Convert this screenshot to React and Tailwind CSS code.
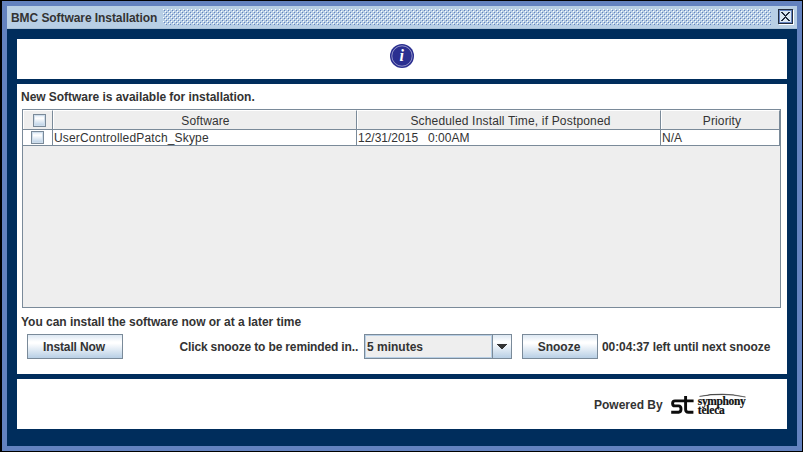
const BUTTON =
  "box-border h-[25px] shrink-0 border border-[#7a8a99] bg-[linear-gradient(to_bottom,#dde8f3_0%,#ffffff_30%,#ffffff_36%,#b8cfe5_100%)] pt-px text-center font-bold leading-[23px]";

function Check() {
  return (
    <span className="block size-[13px] border border-[#7a8a99] bg-[linear-gradient(to_bottom,#dde8f3_0%,#ffffff_30%,#b8cfe5_100%)] shadow-[inset_0_0_0_1px_#cfdeec]" />
  );
}

function Bumps() {
  return (
    <svg className="ml-[6px] h-4 w-[608px] shrink-0" shapeRendering="crispEdges" aria-hidden="true">
      <defs>
        <pattern id="bumps" width="4" height="4" patternUnits="userSpaceOnUse">
          <path d="M0 0h1v1H0zM2 2h1v1H2z" fill="#ffffff" />
          <path d="M1 1h1v1H1zM3 3h1v1H3z" fill="#6382bf" />
        </pattern>
      </defs>
      <rect width="608" height="16" fill="url(#bumps)" />
    </svg>
  );
}

function TitleBar() {
  return (
    <header className="flex h-[23px] shrink-0 items-center border-b border-[#a9c0d6] bg-[#b8cfe5] pl-[4px]">
      <span className="w-[146px] shrink-0 pt-px font-bold tracking-[-0.07px]">BMC Software Installation</span>
      <Bumps />
      <svg className="ml-[7px] size-4" viewBox="0 0 16 16" shapeRendering="crispEdges">
        <path d="M1 15.5h15M15.5 1v15" stroke="#fff" />
        <path d="M.5.5h14v14H.5z" fill="#b8cfe5" stroke="#222c3d" />
        <path d="M1.5 14V1.5H14" fill="none" stroke="#6382bf" />
        <path d="M2 13.5h12M13.5 2v12" stroke="#6382bf" />
        <path d="M2 2h11v11H2z" fill="#dce8f4" />
        <path d="M3 3h2v1h1v1h1v1h1v-1h1v-1h1v-1h2v1h-1v1h-1v1h-1v1h-1v1h1v1h1v1h1v1h1v1h-2v-1h-1v-1h-1v-1h-1v1h-1v1h-1v1h-2v-1h1v-1h1v-1h1v-1h1v-1h-1v-1h-1v-1h-1v-1h-1z" fill="#222c3d" />
      </svg>
    </header>
  );
}

function HeadCell({ children, className }) {
  return (
    <div className={`flex h-[19px] items-center justify-center border-l border-r border-t border-white border-r-[#7a8a99] bg-[#eeeeee] ${className}`}>
      {children}
    </div>
  );
}

function SoftwareTable() {
  return (
    <div className="ml-[5px] h-[199px] w-[759px] border border-[#7a8a99] bg-[#eeeeee]">
      <div className="grid h-5 w-[757px] grid-cols-[30px_304px_304px_119px] border-b border-[#7a8a99]">
        <HeadCell className="pl-[3px] pt-px"><Check /></HeadCell>
        <HeadCell className="pl-px pt-[2px] tracking-[0.12px]">Software</HeadCell>
        <HeadCell className="pl-[3px] pt-[2px] tracking-[0.17px]">Scheduled Install Time, if Postponed</HeadCell>
        <HeadCell className="pl-[3px] pt-[2px] tracking-[0.12px]">Priority</HeadCell>
      </div>
      <div className="grid h-4 w-[757px] grid-cols-[30px_304px_304px_119px] border-b border-[#7a8a99] bg-white leading-[17px]">
        <div className="flex items-center justify-center border-r border-[#7a8a99]"><Check /></div>
        <div className="h-[15px] border-r border-[#7a8a99] pl-px tracking-[0.16px]">UserControlledPatch_Skype</div>
        <div className="h-[15px] whitespace-pre border-r border-[#7a8a99] pl-px">12/31/2015   0:00AM</div>
        <div className="h-[15px] border-r border-[#7a8a99] pl-px">N/A</div>
      </div>
    </div>
  );
}

function Actions() {
  return (
    <div className="flex h-[25px] items-center pl-[10px] font-bold">
      <button className={`${BUTTON} w-[96px] pr-[2px] tracking-[-0.12px]`}>Install Now</button>
      <span className="ml-[56.5px] w-[184.5px] shrink-0 tracking-[-0.15px]">Click snooze to be reminded in..</span>
      <div className="flex h-[25px] w-[148px] shrink-0 border border-[#7a8a99]">
        <span className="h-[23px] w-[127px] border border-[#b8cfe5] bg-[#eeeeee] pl-px leading-[22px]">5 minutes</span>
        <span className="flex flex-1 items-center justify-center border-l border-[#7a8a99] bg-[linear-gradient(to_bottom,#dde8f3_0%,#ffffff_30%,#b8cfe5_100%)]">
          <svg width="10" height="5" shapeRendering="crispEdges"><path d="M0 0h10v1H9v1H8v1H7v1H6v1H4V4H3V3H2V2H1V1H0z" fill="#333" /></svg>
        </span>
      </div>
      <button className={`${BUTTON} ml-[10px] w-[76px] pr-[2px]`}>Snooze</button>
      <span className="ml-[4px] tracking-[-0.08px]">00:04:37 left until next snooze</span>
    </div>
  );
}

function InfoIcon() {
  return (
    <svg className="size-[26px]" viewBox="0 0 26 26">
      <circle cx="13" cy="13" r="12" fill="#2b2f90" />
      <circle cx="13" cy="13" r="10.2" fill="none" stroke="#a9abd6" strokeWidth=".8" />
      <text x="12.8" y="18.2" textAnchor="middle" fill="#fff" className="font-['Liberation_Serif',serif] text-[16px] font-bold italic">i</text>
    </svg>
  );
}

function Logo() {
  return (
    <svg className="ml-[7px] h-[24px] w-[78px]" viewBox="0 0 78 24">
      <path d="M23.6 8.9H5Q2.6 8.9 2.6 11.4T5 13.9H8.6Q11 13.9 11 17T8.6 20.3H1.2M15.6 4V17.6Q15.6 20.3 18.4 20.3H23.4" fill="none" stroke="#0c0c0c" strokeWidth="2.9" />
      <path d="M29.5 4.4Q52-.6 75.5 5Q52 .5 29.5 4.4z" fill="#111" stroke="#111" strokeWidth=".4" />
      <text x="27.8" y="12.8" textLength="48" className="font-['Liberation_Serif',serif] text-[11.5px]" fill="#111" stroke="#111" strokeWidth=".2">symphony</text>
      <text x="27.8" y="21.8" textLength="27" className="font-['Liberation_Serif',serif] text-[11.5px]" fill="#111" stroke="#111" strokeWidth=".2">teleca</text>
    </svg>
  );
}

export default function App() {
  return (
    <div className="h-[452px] w-[803px] overflow-hidden whitespace-nowrap border-b border-l-2 border-r border-t border-black bg-[#6382bf] p-[5px] font-['Liberation_Sans',Arial,sans-serif] text-[12px] leading-[14px] text-[#333333]">
      <div className="flex h-[440px] w-[790px] flex-col bg-[#002d5c]">
        <TitleBar />
        <main className="flex flex-col gap-[5px] px-[10px] pt-[10px]">
          <section className="flex h-[40px] justify-center bg-white pt-[4px]"><InfoIcon /></section>
          <section className="h-[290px] bg-white">
            <p className="h-[25px] pl-[4px] pt-[6px] font-bold tracking-[-0.04px]">New Software is available for installation.</p>
            <SoftwareTable />
            <p className="h-[26px] pl-[4px] pt-[7px] font-bold tracking-[-0.02px]">You can install the software now or at a later time</p>
            <Actions />
          </section>
          <section className="flex h-[50px] items-center bg-white pl-[577px] font-bold">
            <span className="w-[69px] shrink-0 pt-[2px]">Powered By</span>
            <Logo />
          </section>
        </main>
      </div>
    </div>
  );
}
